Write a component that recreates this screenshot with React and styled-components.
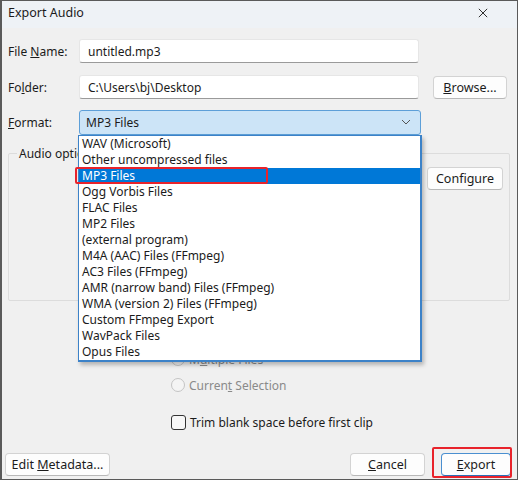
import React from "react";
import styled, { createGlobalStyle } from "styled-components";

const GlobalStyle = createGlobalStyle`
  html, body {
    margin: 0;
    padding: 0;
    background: #f0f0f0;
  }
  body {
    font-family: "Noto Sans", "Open Sans", sans-serif;
    font-size: 12px;
    color: #1b1b1b;
  }
`;

const formats = [
    "WAV (Microsoft)",
    "Other uncompressed files",
    "MP3 Files",
    "Ogg Vorbis Files",
    "FLAC Files",
    "MP2 Files",
    "(external program)",
    "M4A (AAC) Files (FFmpeg)",
    "AC3 Files (FFmpeg)",
    "AMR (narrow band) Files (FFmpeg)",
    "WMA (version 2) Files (FFmpeg)",
    "Custom FFmpeg Export",
    "WavPack Files",
    "Opus Files",
];

const App = () => {
    return (
        <>
            <GlobalStyle />
            <Window>
                <TitleBar>
                    <Title>Export Audio</Title>
                    <CloseIcon viewBox="0 0 12 12">
                        <path d="M1 1 L11 11 M11 1 L1 11" stroke="#1b1b1b" strokeWidth="1.1" />
                    </CloseIcon>
                </TitleBar>
                <Body>
                    <FieldRow $mb={12}>
                        <Label>File <u>N</u>ame:</Label>
                        <TextBox>untitled.mp3</TextBox>
                    </FieldRow>
                    <FieldRow>
                        <Label>Fo<u>l</u>der:</Label>
                        <TextBox>C:\Users\bj\Desktop</TextBox>
                        <Button $width={74} $ml={14}><span><u>B</u>rowse...</span></Button>
                    </FieldRow>
                    <FieldRow>
                        <Label><u>F</u>ormat:</Label>
                        <SelectWrap>
                            <Select>
                                MP3 Files
                                <Chevron viewBox="0 0 10 6">
                                    <path d="M1 1 L5 5 L9 1" stroke="#555" strokeWidth="1" fill="none" />
                                </Chevron>
                            </Select>
                            <DropList>
                                {formats.map((f) => (
                                    <DropItem key={f} $selected={f === "MP3 Files"}>{f}</DropItem>
                                ))}
                                <Highlight $top={31} $left={-4} $width={193} $height={17} />
                            </DropList>
                        </SelectWrap>
                    </FieldRow>
                    <GroupBox>
                        <GroupLegend>Audio options</GroupLegend>
                        <Button $width={76} $height={23}>Configure</Button>
                    </GroupBox>
                    <RangeList>
                        <RadioRow><Radio /><span>Current <u>P</u>roject</span></RadioRow>
                        <RadioRow><Radio /><span>M<u>u</u>ltiple Files</span></RadioRow>
                        <RadioRow><Radio /><span>Curren<u>t</u> Selection</span></RadioRow>
                    </RangeList>
                    <CheckRow>
                        <Checkbox />
                        <span>Trim blank space before first clip</span>
                    </CheckRow>
                    <Footer>
                        <Button $width={105}><span>Edit <u>M</u>etadata...</span></Button>
                        <FooterRight>
                            <Button $width={75}><span><u>C</u>ancel</span></Button>
                            <ExportWrap>
                                <Button $width={70} $primary><span><u>E</u>xport</span></Button>
                                <Highlight $top={-6} $left={-9} $width={80} $height={31} />
                            </ExportWrap>
                        </FooterRight>
                    </Footer>
                </Body>
            </Window>
        </>
    );
};

export default App;

const Window = styled.div`
    width: 518px;
    height: 480px;
    box-sizing: border-box;
    border: 1px solid #5a5a5a;
    border-left-width: 2px;
    background: #f0f0f0;
    display: flex;
    flex-direction: column;
    overflow: hidden;
`;

const TitleBar = styled.div`
    height: 27px;
    box-sizing: border-box;
    flex-shrink: 0;
    background: #eef2f6;
    display: flex;
    align-items: center;
    justify-content: space-between;
    padding: 0 29px 4px 6px;
`;

const Title = styled.div`
    font-size: 12.5px;
`;

const CloseIcon = styled.svg`
    width: 10px;
    height: 10px;
`;

const Body = styled.div`
    flex: 1;
    display: flex;
    flex-direction: column;
    padding: 11px 8px 0 6px;
`;

const FieldRow = styled.div`
    display: flex;
    align-items: center;
    height: 24px;
    margin-bottom: ${(p) => p.$mb || 11}px;
`;

const Label = styled.div`
    width: 71px;
    flex-shrink: 0;
`;

const TextBox = styled.div`
    width: 340px;
    height: 24px;
    box-sizing: border-box;
    background: #ffffff;
    border: 1px solid #e6e6e6;
    border-bottom-color: #9a9a9a;
    border-radius: 3px;
    padding: 0 8px;
    display: flex;
    align-items: center;
`;

const Button = styled.div`
    width: ${(p) => p.$width}px;
    height: ${(p) => p.$height || 23}px;
    margin-left: ${(p) => p.$ml || 0}px;
    box-sizing: border-box;
    background: #fdfdfd;
    border: 1px solid ${(p) => (p.$primary ? "#4a8fd0" : "#d3d3d3")};
    border-bottom-color: ${(p) => (p.$primary ? "#2a6fb8" : "#b8b8b8")};
    border-radius: 4px;
    display: flex;
    align-items: center;
    justify-content: center;
    flex-shrink: 0;
    font-size: 12.5px;
    white-space: nowrap;
`;

const SelectWrap = styled.div`
    position: relative;
`;

const Select = styled.div`
    width: 342px;
    height: 25px;
    box-sizing: border-box;
    background: #cce4f7;
    border: 1px solid #5d9fd8;
    border-radius: 3px;
    padding: 0 9px 0 6px;
    display: flex;
    align-items: center;
    justify-content: space-between;
`;

const Chevron = styled.svg`
    width: 10px;
    height: 6px;
`;

const DropList = styled.div`
    position: absolute;
    top: 25px;
    left: -1px;
    width: 344px;
    box-sizing: border-box;
    background: #ffffff;
    border: 1px solid #3c82c8;
    border-right-width: 2px;
    border-bottom-width: 2px;
    box-shadow: 2px 3px 4px rgba(0, 0, 0, 0.25);
    z-index: 5;
`;

const DropItem = styled.div`
    height: 16px;
    line-height: 16px;
    padding-left: 3px;
    white-space: nowrap;
    background: ${(p) => (p.$selected ? "#0078d7" : "transparent")};
    color: ${(p) => (p.$selected ? "#ffffff" : "#1b1b1b")};
`;

const Highlight = styled.div`
    position: absolute;
    top: ${(p) => p.$top}px;
    left: ${(p) => p.$left}px;
    width: ${(p) => p.$width}px;
    height: ${(p) => p.$height}px;
    box-sizing: border-box;
    border: 2px solid #e8232b;
    border-radius: 2px;
    pointer-events: none;
`;

const GroupBox = styled.div`
    position: relative;
    margin-top: 8px;
    width: 502px;
    height: 148px;
    box-sizing: border-box;
    border: 1px solid #dcdcdc;
    border-radius: 2px;
    display: flex;
    justify-content: flex-end;
    align-items: flex-start;
    padding: 13px 6px 0 0;
`;

const GroupLegend = styled.div`
    position: absolute;
    top: -9px;
    left: 8px;
    white-space: nowrap;
    padding-left: 2px;
    background: #f0f0f0;
`;

const RangeList = styled.div`
    display: flex;
    flex-direction: column;
    padding-left: 163px;
    margin-top: 19px;
`;

const RadioRow = styled.div`
    display: flex;
    align-items: center;
    height: 26px;
    color: #8a8a8a;
    gap: 4px;
`;

const Radio = styled.div`
    width: 12px;
    height: 12px;
    border-radius: 50%;
    border: 1px solid #c4c4c4;
    background: #f4f4f4;
`;

const CheckRow = styled.div`
    display: flex;
    align-items: center;
    gap: 4px;
    padding-left: 163px;
    margin-top: 16px;
    height: 16px;
`;

const Checkbox = styled.div`
    width: 13px;
    height: 13px;
    border: 1px solid #333;
    border-radius: 3px;
    background: #f7f7f7;
`;

const Footer = styled.div`
    display: flex;
    justify-content: space-between;
    align-items: center;
    margin-top: auto;
    margin-bottom: 3px;
    margin-left: -3px;
`;

const FooterRight = styled.div`
    display: flex;
    align-items: center;
    gap: 16px;
    margin-right: -2px;
`;

const ExportWrap = styled.div`
    position: relative;
`;
